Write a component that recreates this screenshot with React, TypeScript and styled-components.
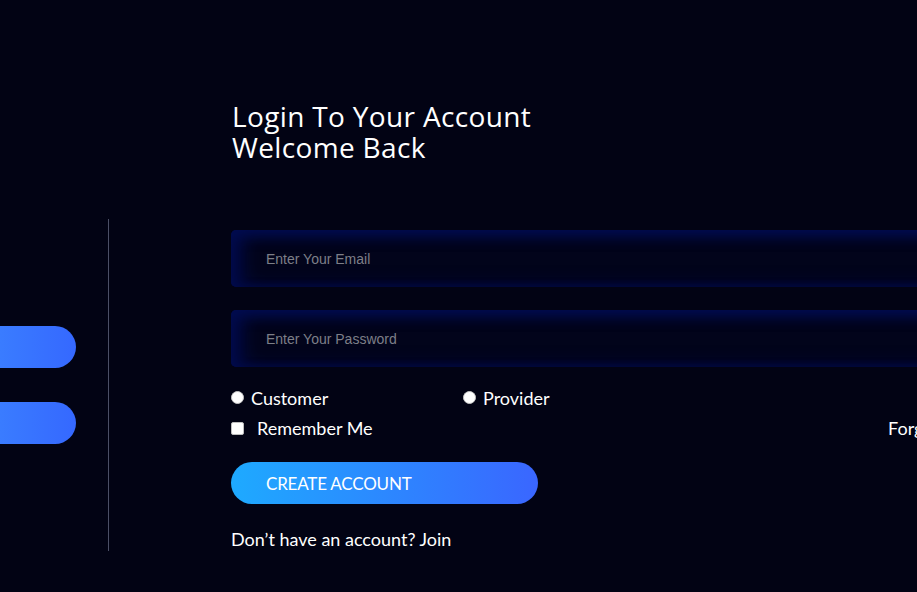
import React from "react";
import styled, { createGlobalStyle } from "styled-components";

const GlobalStyle = createGlobalStyle`
  html, body {
    margin: 0;
    padding: 0;
    background: #020314;
    overflow: hidden;
  }
  * { box-sizing: border-box; }
`;

const Page = styled.div`
  width: 100vw;
  height: 100vh;
  background: #020314;
  color: #ffffff;
  font-family: Lato, "Open Sans", sans-serif;
  padding-top: 101px;
  overflow: hidden;
`;

const Heading = styled.h1`
  margin: 0 0 0 232px;
  font-family: "Open Sans", "Noto Sans", sans-serif;
  font-weight: 400;
  font-size: 28px;
  line-height: 31px;
  letter-spacing: 0.35px;
  color: #ffffff;
  white-space: nowrap;
`;

const Row = styled.div`
  display: flex;
  align-items: stretch;
  margin-top: 56px;
`;

const SidePanel = styled.div`
  flex: 0 0 109px;
  border-right: 1px solid #4b4f66;
  display: flex;
  flex-direction: column;
  justify-content: center;
  gap: 34px;
`;

const SideTab = styled.div`
  width: 76px;
  height: 42px;
  border-radius: 0 21px 21px 0;
  background: linear-gradient(90deg, #3a7cff 0%, #3568ff 100%);
`;

const Form = styled.form`
  flex: 0 0 797px;
  margin-left: 122px;
  padding: 11px 0 2px 0;
  display: flex;
  flex-direction: column;
`;

const Field = styled.input`
  width: 100%;
  height: 57px;
  border: none;
  outline: none;
  border-radius: 5px;
  padding: 0 0 0 35px;
  background: #02041b;
  box-shadow: inset 0 6px 14px #000c50, inset 12px 0 18px #000a46,
    inset 0 -2px 6px #00072e;
  color: #ffffff;
  font-family: "Liberation Sans", Arial, sans-serif;
  font-size: 14px;
  & + & { margin-top: 23px; }
  &::placeholder { color: #7d7f88; }
`;

const OptionRow = styled.div<{ $top: number }>`
  display: flex;
  align-items: center;
  justify-content: space-between;
  height: 20px;
  margin-top: ${(p) => p.$top}px;
`;

const RadioGroup = styled.div`
  display: flex;
  align-items: center;
`;

const Choice = styled.label<{ $gap: number; $width?: number }>`
  display: flex;
  align-items: center;
  gap: ${(p) => p.$gap}px;
  width: ${(p) => (p.$width ? `${p.$width}px` : "auto")};
  font-size: 18px;
  color: #ffffff;
  white-space: nowrap;
`;

const Radio = styled.input.attrs({ type: "radio" })`
  appearance: none;
  margin: 0 0 1px 0;
  width: 13px;
  height: 13px;
  border-radius: 50%;
  background: #ffffff;
  border: 1px solid #c8c8c8;
`;

const Check = styled.input.attrs({ type: "checkbox" })`
  appearance: none;
  margin: 0;
  width: 13px;
  height: 13px;
  border-radius: 2px;
  background: #ffffff;
  border: 1px solid #bdbdbd;
`;

const Forgot = styled.a`
  color: #ffffff;
  font-size: 18px;
  text-decoration: none;
`;

const SubmitButton = styled.button`
  margin-top: 24px;
  width: 307px;
  height: 42px;
  border: none;
  border-radius: 21px;
  padding: 0 0 0 35px;
  text-align: left;
  background: linear-gradient(90deg, #1eaaff 0%, #2c88ff 50%, #3a66ff 100%);
  color: #ffffff;
  font-family: Lato, sans-serif;
  font-size: 17px;
  letter-spacing: -0.2px;
`;

const JoinText = styled.p`
  margin: 25px 0 0 0;
  font-size: 18px;
  line-height: 20px;
  color: #ffffff;
`;

export default function App() {
  return (
    <>
      <GlobalStyle />
      <Page>
        <Heading>
          Login To Your Account
          <br />
          Welcome Back
        </Heading>
        <Row>
          <SidePanel>
            <SideTab />
            <SideTab />
          </SidePanel>
          <Form onSubmit={(e) => e.preventDefault()}>
            <Field type="email" placeholder="Enter Your Email" />
            <Field type="password" placeholder="Enter Your Password" />
            <OptionRow $top={21}>
              <RadioGroup>
                <Choice $gap={7} $width={232}>
                  <Radio name="role" />
                  Customer
                </Choice>
                <Choice $gap={7}>
                  <Radio name="role" />
                  Provider
                </Choice>
              </RadioGroup>
            </OptionRow>
            <OptionRow $top={10}>
              <Choice $gap={13}>
                <Check />
                Remember Me
              </Choice>
              <Forgot href="#">Forgot Password?</Forgot>
            </OptionRow>
            <SubmitButton type="submit">CREATE ACCOUNT</SubmitButton>
            <JoinText>Don’t have an account? Join</JoinText>
          </Form>
        </Row>
      </Page>
    </>
  );
}
